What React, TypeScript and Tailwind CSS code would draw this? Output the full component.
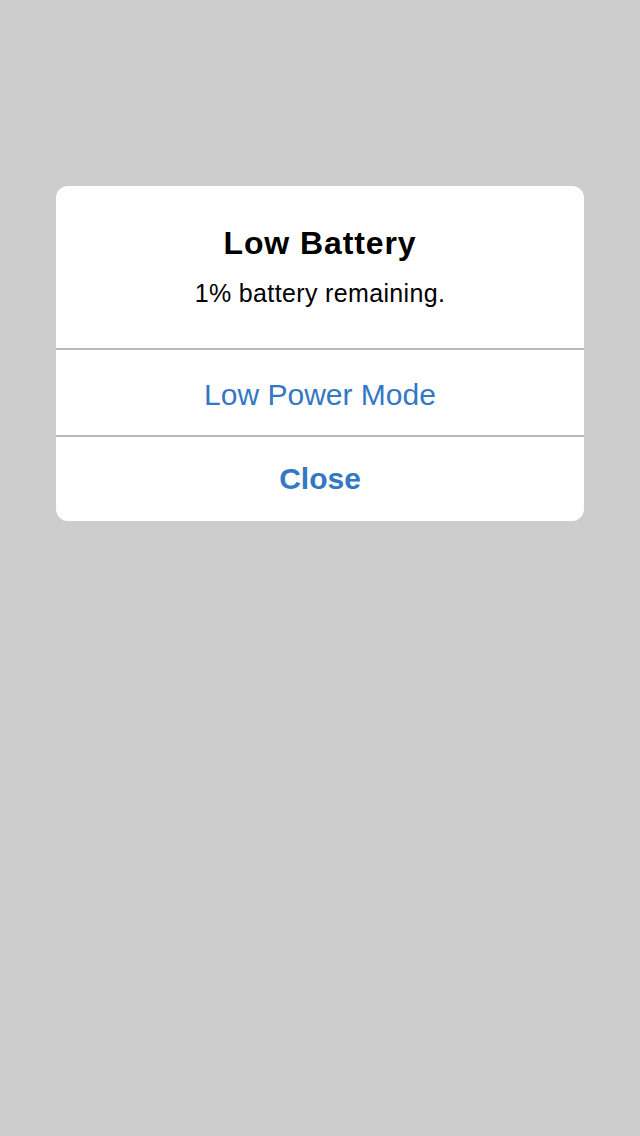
export default function App() {
  return (
    <div
      className="min-h-[1136px] w-full bg-[#cdcdcd] pt-[186px] px-[56px]"
      style={{ fontFamily: '"Liberation Sans", Arial, sans-serif' }}
    >
      <div className="bg-white rounded-[12px] overflow-hidden">
        <div className="h-[162px] flex flex-col items-center pt-[41px]">
          <h1 className="text-[32px] leading-none font-bold tracking-[0.9px] text-black">Low Battery</h1>
          <p className="mt-[22px] text-[25px] leading-none tracking-[0.35px] text-black">1% battery remaining.</p>
        </div>
        <div className="h-[2px] bg-[#b9b9b9]" />
        <button className="w-full h-[85px] pt-[4px] flex items-center justify-center text-[30px] leading-none text-[#3478c5]">
          Low Power Mode
        </button>
        <div className="h-[2px] bg-[#b9b9b9]" />
        <button className="w-full h-[84px] flex items-center justify-center text-[30px] leading-none font-bold text-[#3478c5]">
          Close
        </button>
      </div>
    </div>
  );
}
